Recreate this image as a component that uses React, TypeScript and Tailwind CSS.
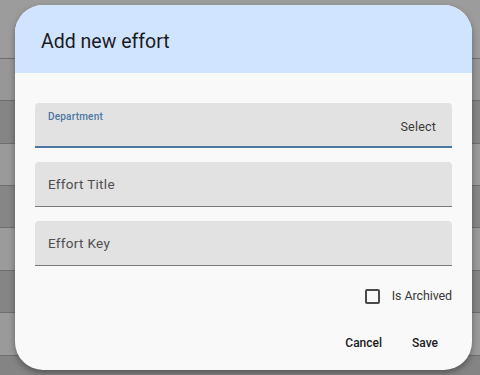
import React from "react";

const ROWS = [59, 42, 43, 42, 42, 43, 42, 43, 42];
const SHADES = ["bg-[#9c9c9c]", "bg-[#979797]", "bg-[#858585]", "bg-[#9a9a9a]", "bg-[#868686]", "bg-[#9b9b9b]", "bg-[#858585]", "bg-[#9a9a9a]", "bg-[#848484]"];

function Field({ label }: { label: string }) {
  return (
    <div className="h-[45px] bg-[#e2e2e2] rounded-t-[4px] border-b-[1.5px] border-[#7a7a7a] flex items-center px-[13px]">
      <span className="text-[13.5px] text-[#4f4f4f] tracking-[0.3px]">{label}</span>
    </div>
  );
}

export default function App() {
  return (
    <div className="relative w-[480px] h-[375px] overflow-hidden font-['Roboto',sans-serif]">
      {/* dimmed table behind the dialog */}
      <div className="flex flex-col">
        {ROWS.map((h, i) => (
          <div key={i} style={{ height: h }} className={`${SHADES[i]} border-b border-[#6e6e6e]`} />
        ))}
      </div>

      <div className="absolute left-[15px] top-[5px] w-[457px] h-[365px] rounded-[28px] bg-[#f9f9f9] overflow-hidden shadow-[0_3px_6px_rgba(0,0,0,0.35)] flex flex-col">
        <div className="h-[68px] bg-[#d1e4ff] flex items-center pl-[26px] shrink-0">
          <h2 className="text-[19.5px] text-[#1b1b1f] leading-none pt-[6px]">Add new effort</h2>
        </div>

        <div className="flex flex-col px-[20px] pt-[30px] gap-[14px]">
          <div className="h-[45px] bg-[#e2e2e2] rounded-t-[4px] border-b-2 border-[#4a78a0] relative px-[13px]">
            <span className="absolute left-[13px] top-[6px] text-[10px] font-medium text-[#4a78a0] tracking-[0.2px]">Department</span>
            <span className="absolute right-[16px] top-[15px] text-[12.5px] text-[#3a3a3a] tracking-[0.2px]">Select</span>
          </div>
          <Field label="Effort Title" />
          <Field label="Effort Key" />
        </div>

        <div className="flex justify-end items-center pr-[20px] mt-[21px] gap-[12px]">
          <span className="w-[15px] h-[15px] border-2 border-[#4a4a4a] rounded-[2px]" />
          <span className="text-[12.5px] text-[#3a3a3a] tracking-[-0.1px]">Is Archived</span>
        </div>

        <div className="flex justify-end items-center pr-[34px] mt-[28px] gap-[30px]">
          <span className="text-[12px] font-medium text-[#1b1b1f]">Cancel</span>
          <span className="text-[12px] font-medium text-[#1b1b1f]">Save</span>
        </div>
      </div>
    </div>
  );
}
